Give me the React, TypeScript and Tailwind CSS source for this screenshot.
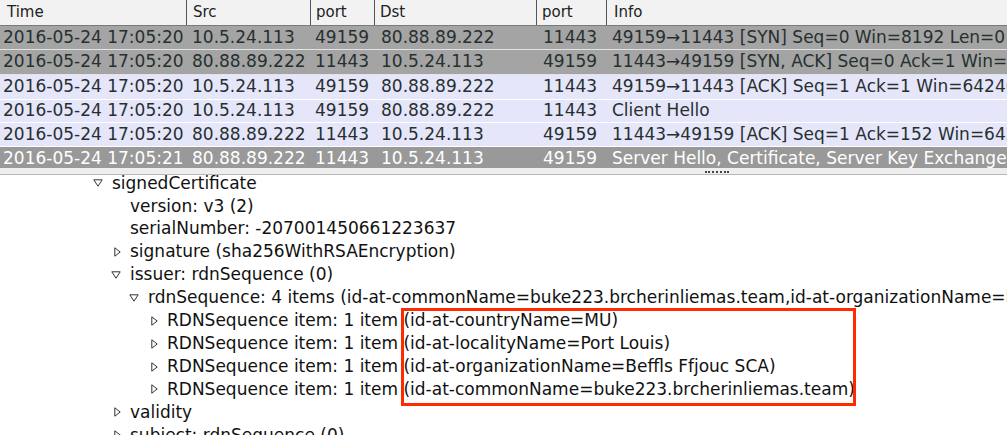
import React from 'react';

type Packet = {
  time: string;
  src: string;
  sport: string;
  dst: string;
  dport: string;
  info: string;
  tone: 'gray' | 'lavender' | 'selected';
  h: string;
};

const packets: Packet[] = [
  { time: '2016-05-24 17:05:20', src: '10.5.24.113', sport: '49159', dst: '80.88.89.222', dport: '11443', info: '49159\u219211443 [SYN] Seq=0 Win=8192 Len=0 MSS=1460 WS=256 SACK_PERM=1', tone: 'gray', h: 'h-[24px]' },
  { time: '2016-05-24 17:05:20', src: '80.88.89.222', sport: '11443', dst: '10.5.24.113', dport: '49159', info: '11443\u219249159 [SYN, ACK] Seq=0 Ack=1 Win=64240 Len=0 MSS=1460', tone: 'gray', h: 'h-[25px]' },
  { time: '2016-05-24 17:05:20', src: '10.5.24.113', sport: '49159', dst: '80.88.89.222', dport: '11443', info: '49159\u219211443 [ACK] Seq=1 Ack=1 Win=64240 Len=0', tone: 'lavender', h: 'h-[25px]' },
  { time: '2016-05-24 17:05:20', src: '10.5.24.113', sport: '49159', dst: '80.88.89.222', dport: '11443', info: 'Client Hello', tone: 'lavender', h: 'h-[23px]' },
  { time: '2016-05-24 17:05:20', src: '80.88.89.222', sport: '11443', dst: '10.5.24.113', dport: '49159', info: '11443\u219249159 [ACK] Seq=1 Ack=152 Win=64240 Len=0', tone: 'lavender', h: 'h-[24px]' },
  { time: '2016-05-24 17:05:21', src: '80.88.89.222', sport: '11443', dst: '10.5.24.113', dport: '49159', info: 'Server Hello, Certificate, Server Key Exchange, Server Hello Done', tone: 'selected', h: 'h-[23px]' },
];

const toneClass = {
  gray: 'bg-[#a4a4a4] text-[#26302f] border-b border-[#e4e4e4]',
  lavender: 'bg-[#e6e6fb] text-[#26302f] border-b border-white',
  selected: 'bg-[#999999] text-white',
};

const DownTri = () => (
  <svg width="10" height="8" viewBox="0 0 10 8" className="shrink-0">
    <polygon points="0.8,0.8 9.2,0.8 5,7.2" fill="none" stroke="#333" strokeWidth="1" />
  </svg>
);

const RightTri = () => (
  <svg width="7" height="10" viewBox="0 0 7 10" className="shrink-0">
    <polygon points="0.8,0.8 6.2,5 0.8,9.2" fill="none" stroke="#333" strokeWidth="1" />
  </svg>
);

type Node = { text: string; level: 0 | 1 | 2 | 3; icon?: 'down' | 'right' };

const tree: Node[] = [
  { text: 'signedCertificate', level: 0, icon: 'down' },
  { text: 'version: v3 (2)', level: 1 },
  { text: 'serialNumber: -207001450661223637', level: 1 },
  { text: 'signature (sha256WithRSAEncryption)', level: 1, icon: 'right' },
  { text: 'issuer: rdnSequence (0)', level: 1, icon: 'down' },
  { text: 'rdnSequence: 4 items (id-at-commonName=buke223.brcherinliemas.team,id-at-organizationName=Beffls Ffjouc SCA,id-at-localityName=Port Louis,id-at-countryName=MU)', level: 2, icon: 'down' },
  { text: 'RDNSequence item: 1 item (id-at-countryName=MU)', level: 3, icon: 'right' },
  { text: 'RDNSequence item: 1 item (id-at-localityName=Port Louis)', level: 3, icon: 'right' },
  { text: 'RDNSequence item: 1 item (id-at-organizationName=Beffls Ffjouc SCA)', level: 3, icon: 'right' },
  { text: 'RDNSequence item: 1 item (id-at-commonName=buke223.brcherinliemas.team)', level: 3, icon: 'right' },
  { text: 'validity', level: 1, icon: 'right' },
  { text: 'subject: rdnSequence (0)', level: 1, icon: 'right' },
];

const levelPad = ['pl-[93px]', 'pl-[111px]', 'pl-[129px]', 'pl-[148px]'];

const App = () => {
  return (
    <div className="w-[1007px] h-[435px] overflow-hidden bg-white text-[17px] font-['DejaVu_Sans',sans-serif]">
      {/* packet list */}
      <div className="h-[168px] overflow-hidden bg-[#e6e6fb]">
        <div className="flex h-[26px] bg-[#f2f2f2] border-b border-[#7a7a7a] text-[15px] text-[#222] whitespace-nowrap">
          <div className="w-[187px] pl-[7px] flex items-center border-r border-[#555]">Time</div>
          <div className="w-[124px] pl-[6px] flex items-center border-r border-[#555]">Src</div>
          <div className="w-[64px] pl-[5px] flex items-center border-r border-[#555]">port</div>
          <div className="w-[162px] pl-[5px] flex items-center border-r border-[#555]">Dst</div>
          <div className="w-[70px] pl-[5px] flex items-center border-r border-[#555]">port</div>
          <div className="flex-1 pl-[7px] flex items-center">Info</div>
        </div>
        {packets.map((p, i) => (
          <div key={i} className={`flex shrink-0 items-center whitespace-nowrap overflow-hidden ${p.h} ${toneClass[p.tone]}`}>
            <div className="w-[187px] shrink-0 pl-[3px]">{p.time}</div>
            <div className="w-[124px] shrink-0 pl-[5px]">{p.src}</div>
            <div className="w-[64px] shrink-0 pl-[4px]">{p.sport}</div>
            <div className="w-[162px] shrink-0 pl-[6px]">{p.dst}</div>
            <div className="w-[70px] shrink-0 pl-[6px]">{p.dport}</div>
            <div className="shrink-0 pl-[5px]">{p.info}</div>
          </div>
        ))}
      </div>

      {/* splitter */}
      <div className="h-[7px] bg-[#eeeeee] border-b border-[#b8b8b8] flex justify-center pl-[426px]">
        <div className="w-[24px] mt-[3px] border-t-2 border-dotted border-[#444] h-0" />
      </div>

      {/* detail tree */}
      <div className="relative -mt-[3px] text-[#111] whitespace-nowrap">
        {tree.map((n, i) => (
          <div key={i} className={`flex h-[22.9px] items-center ${levelPad[n.level]}`}>
            <div className="w-[19px] shrink-0 flex items-center">
              {n.icon === 'down' && <DownTri />}
              {n.icon === 'right' && <span className="pl-[3px] flex"><RightTri /></span>}
            </div>
            <span>{n.text}</span>
          </div>
        ))}
        <div className="absolute left-[401px] top-[136px] w-[455px] h-[98px] border-[3px] border-[#ff2a00]" />
      </div>
    </div>
  );
};

export default App;
